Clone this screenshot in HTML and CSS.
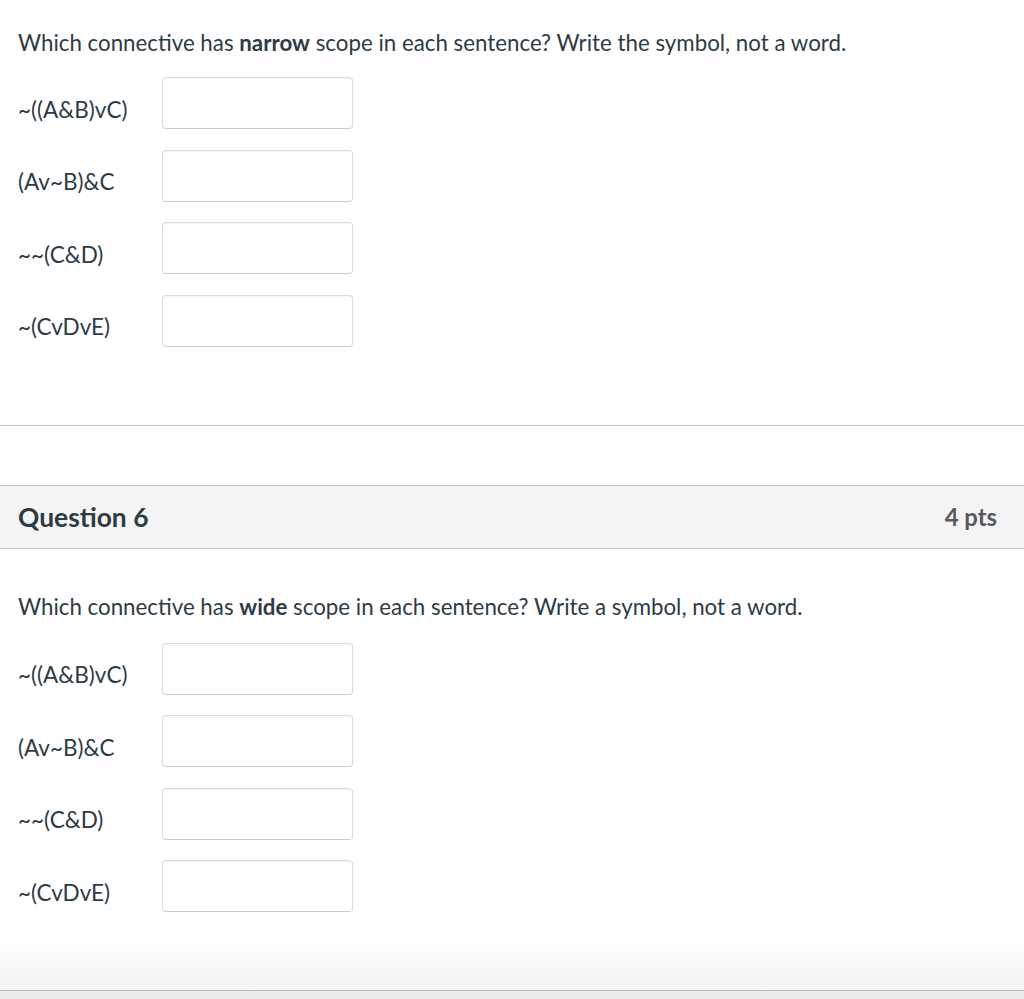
FILE: index.html
```html
<!DOCTYPE html>
<html>
<head>
<meta charset="utf-8">
<link rel="stylesheet" href="styles.css">
</head>
<body>
<div class="page">
  <section class="q-body first">
    <p class="q-text">Which connective has <strong>narrow</strong> scope in each sentence? Write the symbol, not a word.</p>
    <div class="answers">
      <div class="row"><span class="label">~((A&amp;B)vC)</span><input class="box" type="text"></div>
      <div class="row"><span class="label">(Av~B)&amp;C</span><input class="box" type="text"></div>
      <div class="row"><span class="label">~~(C&amp;D)</span><input class="box" type="text"></div>
      <div class="row"><span class="label">~(CvDvE)</span><input class="box" type="text"></div>
    </div>
  </section>
  <hr class="divider">
  <header class="q-header">
    <h2 class="q-title">Question 6</h2>
    <span class="q-pts">4 pts</span>
  </header>
  <section class="q-body second">
    <p class="q-text">Which connective has <strong>wide</strong> scope in each sentence? Write a symbol, not a word.</p>
    <div class="answers">
      <div class="row"><span class="label">~((A&amp;B)vC)</span><input class="box" type="text"></div>
      <div class="row"><span class="label">(Av~B)&amp;C</span><input class="box" type="text"></div>
      <div class="row"><span class="label">~~(C&amp;D)</span><input class="box" type="text"></div>
      <div class="row"><span class="label">~(CvDvE)</span><input class="box" type="text"></div>
    </div>
  </section>
  <div class="footer-fade"></div>
  <div class="footer-bar"></div>
</div>
</body>
</html>
```
FILE: styles.css
```css
html, body {
  margin: 0;
  padding: 0;
  background: #fff;
}
body {
  font-family: Lato, "Open Sans", "Liberation Sans", sans-serif;
  color: #2d3b45;
}
.page {
  display: flex;
  flex-direction: column;
  min-height: 999px;
}
.q-body {
  padding: 0 18px;
}
.q-text {
  font-size: 22.3px;
  line-height: 28px;
  margin: 0;
}
.q-text strong {
  font-weight: 700;
}
.first .q-text {
  padding-top: 29px;
}
.second .q-text {
  padding-top: 44px;
}
.answers {
  display: flex;
  flex-direction: column;
  gap: 20.5px;
  margin-top: 20px;
}
.second .answers {
  margin-top: 22px;
}
.row {
  display: flex;
  align-items: center;
  height: 52px;
}
.label {
  width: 144px;
  flex: none;
  font-size: 22.5px;
  line-height: 28px;
  padding-top: 13px;
}
.box {
  box-sizing: border-box;
  width: 191px;
  height: 52px;
  margin: 0;
  border: 1px solid #dadada;
  border-bottom-color: #cdcdcd;
  border-radius: 4px;
  background: #fff;
  box-shadow: inset 0 1px 1px rgba(0,0,0,0.04);
  outline: none;
}
.divider {
  margin: 78px 0 0;
  border: 0;
  border-top: 1px solid #c4c4c4;
  height: 0;
}
.q-header {
  margin-top: 59px;
  height: 62px;
  background: #f4f4f4;
  border-top: 1px solid #c7c7c7;
  border-bottom: 1px solid #c4c4c4;
  display: flex;
  align-items: center;
  justify-content: space-between;
  padding: 0 27px 0 18px;
}
.q-title {
  margin: 0;
  font-size: 26.4px;
  font-weight: 700;
  color: #2d3b45;
}
.q-pts {
  font-size: 23.8px;
  font-weight: 700;
  color: #555a5e;
}
.footer-fade {
  flex: 1;
  background: linear-gradient(to bottom, #ffffff 0%, #ffffff 40%, #f3f3f3 100%);
  min-height: 40px;
  border-bottom: 1px solid #b9b9b9;
}
.footer-bar {
  height: 8px;
  background: #ececec;
}
```
